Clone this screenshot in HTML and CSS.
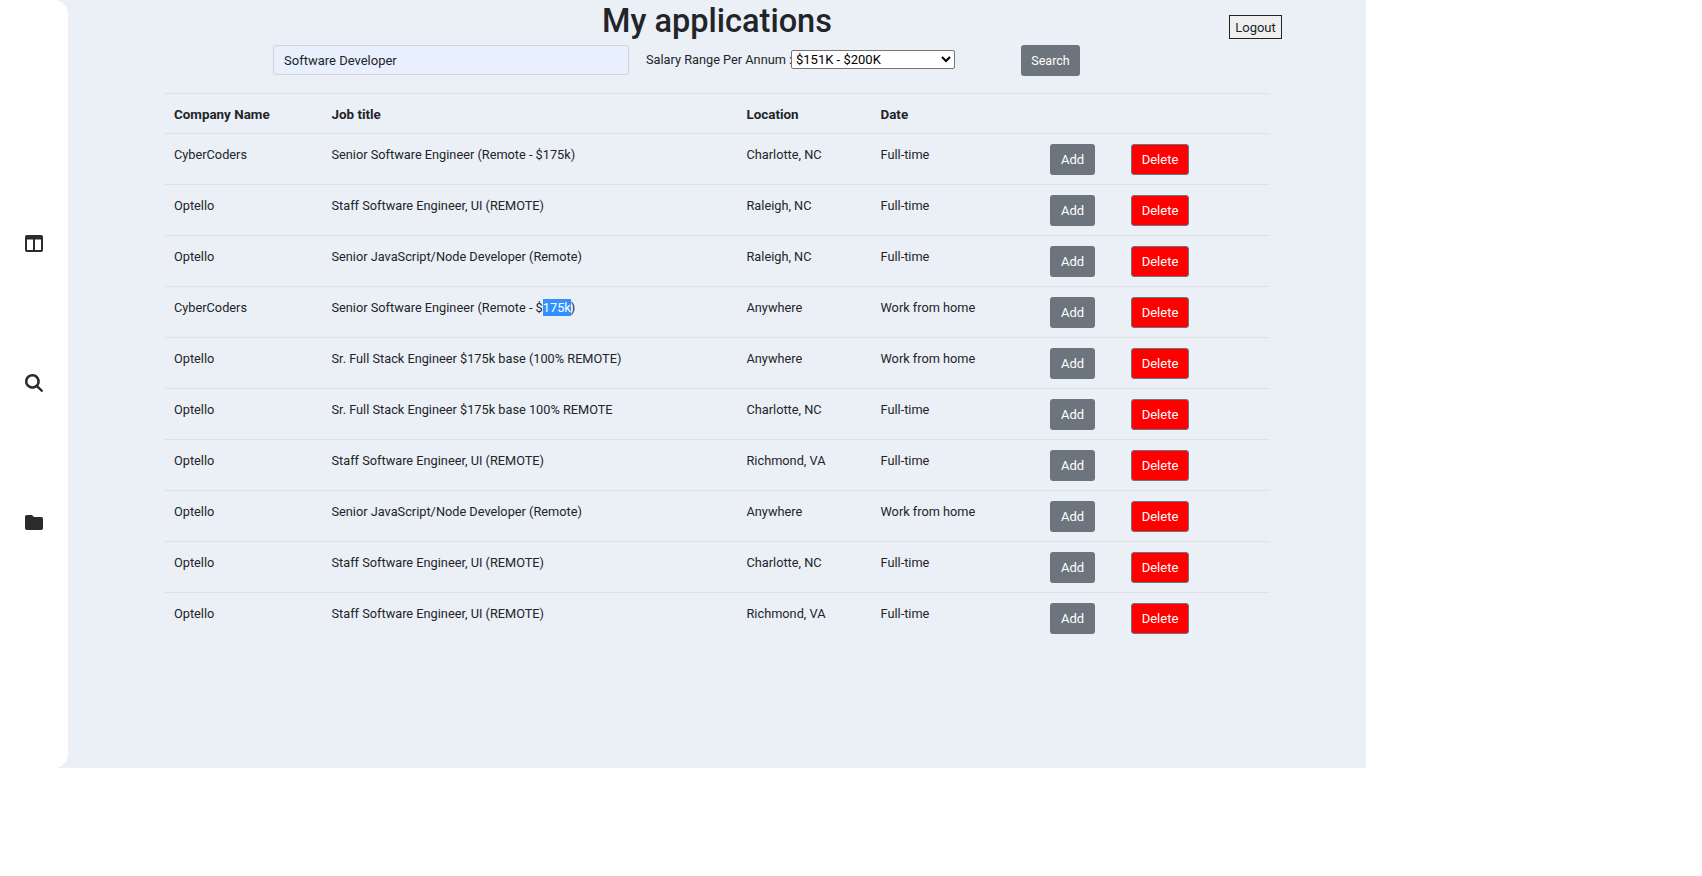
FILE: index.html
```html
<!DOCTYPE html>
<html lang="en">
<head>
  <meta charset="UTF-8">
  <title>My applications</title>
  <link rel="stylesheet" href="styles.css">
</head>
<body>
  <div class="app">
    <!-- Sidebar -->
    <nav class="sidebar">
      <svg class="icon icon-table" viewBox="0 0 18 17"><path fill-rule="evenodd" d="M2 0h14a2 2 0 0 1 2 2v13a2 2 0 0 1-2 2H2a2 2 0 0 1-2-2V2a2 2 0 0 1 2-2zM2 4.500V15h6V4.500zm8 0V15h6V4.500z"/></svg>
      <svg class="icon" viewBox="0 0 18 18"><path fill-rule="evenodd" d="M7.400 0a7.400 7.400 0 0 1 6 11.700l4.200 4.200a1.200 1.200 0 0 1-1.700 1.700l-4.200-4.200A7.400 7.400 0 1 1 7.400 0zm0 2.500a4.900 4.900 0 1 0 0 9.800 4.900 4.900 0 0 0 0-9.800z"/></svg>
      <svg class="icon icon-folder" viewBox="0 0 18 15"><path d="M1.800 0h4.700a1 1 0 0 1 .7.300L9 2h7.200A1.800 1.800 0 0 1 18 3.800v9.400a1.800 1.800 0 0 1-1.800 1.800H1.800A1.800 1.800 0 0 1 0 13.200V1.800A1.800 1.800 0 0 1 1.800 0z"/></svg>
    </nav>

    <main class="content">
      <header class="top">
        <h1>My applications</h1>
        <button class="logout" type="button">Logout</button>
      </header>

      <!-- Search -->
      <form class="search">
        <input class="search-input" type="text" value="Software Developer">
        <label class="salary-label" for="salary">Salary Range Per Annum :</label>
        <select class="salary" id="salary">
          <option>$151K - $200K</option>
        </select>
        <button class="btn btn-grey btn-search" type="button">Search</button>
      </form>

      <table>
        <thead>
          <tr>
            <th class="col-company">Company Name</th>
            <th class="col-title">Job title</th>
            <th class="col-location">Location</th>
            <th class="col-date">Date</th>
            <th class="col-add"></th>
            <th></th>
          </tr>
        </thead>
        <tbody>
          <tr>
            <td>CyberCoders</td>
            <td>Senior Software Engineer (Remote - $175k)</td>
            <td>Charlotte, NC</td>
            <td>Full-time</td>
            <td><button class="btn btn-grey" type="button">Add</button></td>
            <td><button class="btn btn-red" type="button">Delete</button></td>
          </tr>
          <tr>
            <td>Optello</td>
            <td>Staff Software Engineer, UI (REMOTE)</td>
            <td>Raleigh, NC</td>
            <td>Full-time</td>
            <td><button class="btn btn-grey" type="button">Add</button></td>
            <td><button class="btn btn-red" type="button">Delete</button></td>
          </tr>
          <tr>
            <td>Optello</td>
            <td>Senior JavaScript/Node Developer (Remote)</td>
            <td>Raleigh, NC</td>
            <td>Full-time</td>
            <td><button class="btn btn-grey" type="button">Add</button></td>
            <td><button class="btn btn-red" type="button">Delete</button></td>
          </tr>
          <tr>
            <td>CyberCoders</td>
            <td>Senior Software Engineer (Remote - $<span class="picked">175k</span>)</td>
            <td>Anywhere</td>
            <td>Work from home</td>
            <td><button class="btn btn-grey" type="button">Add</button></td>
            <td><button class="btn btn-red" type="button">Delete</button></td>
          </tr>
          <tr>
            <td>Optello</td>
            <td>Sr. Full Stack Engineer $175k base (100% REMOTE)</td>
            <td>Anywhere</td>
            <td>Work from home</td>
            <td><button class="btn btn-grey" type="button">Add</button></td>
            <td><button class="btn btn-red" type="button">Delete</button></td>
          </tr>
          <tr>
            <td>Optello</td>
            <td>Sr. Full Stack Engineer $175k base 100% REMOTE</td>
            <td>Charlotte, NC</td>
            <td>Full-time</td>
            <td><button class="btn btn-grey" type="button">Add</button></td>
            <td><button class="btn btn-red" type="button">Delete</button></td>
          </tr>
          <tr>
            <td>Optello</td>
            <td>Staff Software Engineer, UI (REMOTE)</td>
            <td>Richmond, VA</td>
            <td>Full-time</td>
            <td><button class="btn btn-grey" type="button">Add</button></td>
            <td><button class="btn btn-red" type="button">Delete</button></td>
          </tr>
          <tr>
            <td>Optello</td>
            <td>Senior JavaScript/Node Developer (Remote)</td>
            <td>Anywhere</td>
            <td>Work from home</td>
            <td><button class="btn btn-grey" type="button">Add</button></td>
            <td><button class="btn btn-red" type="button">Delete</button></td>
          </tr>
          <tr>
            <td>Optello</td>
            <td>Staff Software Engineer, UI (REMOTE)</td>
            <td>Charlotte, NC</td>
            <td>Full-time</td>
            <td><button class="btn btn-grey" type="button">Add</button></td>
            <td><button class="btn btn-red" type="button">Delete</button></td>
          </tr>
          <tr>
            <td>Optello</td>
            <td>Staff Software Engineer, UI (REMOTE)</td>
            <td>Richmond, VA</td>
            <td>Full-time</td>
            <td><button class="btn btn-grey" type="button">Add</button></td>
            <td><button class="btn btn-red" type="button">Delete</button></td>
          </tr>
        </tbody>
      </table>
    </main>
  </div>
</body>
</html>
```

FILE: styles.css
```css
body {
  margin: 0;
  background-color: #fff;
  color: #212529;
  font-family: Roboto, "Noto Sans", sans-serif;
  font-size: 12.75px;
}
.app {
  display: flex;
  width: 1366px;
  height: 768px;
  background-color: #ebeff6;
}
.sidebar {
  width: 68px;
  flex-shrink: 0;
  box-sizing: border-box;
  padding-top: 235px;
  display: flex;
  flex-direction: column;
  align-items: center;
  gap: 122px;
  background-color: #fff;
  border-radius: 0 14px 14px 0;
}
.icon {
  width: 18px;
  height: 18px;
  fill: #2b2b2b;
}
.icon-table {
  height: 17px;
}
.icon-folder {
  height: 15px;
  margin-top: 1px;
}
.content {
  flex: 1;
  padding: 0 96px;
}
.top {
  position: relative;
  height: 45px;
}
h1 {
  margin: 0;
  text-align: center;
  font-size: 32.5px;
  font-weight: 500;
  line-height: 43px;
}
.logout {
  position: absolute;
  top: 15px;
  right: -12px;
  width: 53px;
  height: 24px;
  padding: 0;
  border: 1px solid #222;
  background-color: #efefef;
  color: #212529;
  font: inherit;
  font-size: 13px;
}
.search {
  display: flex;
  align-items: flex-start;
  height: 31px;
  margin: 0 0 17px 109px;
}
.search-input {
  box-sizing: border-box;
  width: 356px;
  height: 30px;
  padding: 0 10px;
  border: 1px solid #ced4da;
  border-radius: 3px;
  background-color: #e8f0fe;
  color: #212529;
  font: inherit;
  font-size: 13px;
}
.salary-label {
  flex: 0 0 145px;
  min-width: 0;
  margin-left: 17px;
  line-height: 30px;
  white-space: nowrap;
}
.salary {
  width: 164px;
  height: 19px;
  margin-top: 5px;
  padding: 0;
  background-color: #fff;
  border: 1px solid #767676;
  border-radius: 2px;
  color: #000;
  font: inherit;
  font-size: 13px;
}
.btn {
  height: 31px;
  padding: 0;
  border: 1px solid transparent;
  border-radius: 3px;
  color: #fff;
  font: inherit;
  font-size: 13px;
}
.btn-grey {
  background-color: #6c757d;
  width: 45px;
}
.btn-search {
  width: 59px;
  margin-left: 66px;
  font-size: 12.5px;
}
.btn-red {
  background-color: #f00;
  border-color: #6c757d;
  width: 58px;
}
table {
  border-collapse: collapse;
  width: 1106px;
  table-layout: fixed;
}
th, td {
  border-top: 1px solid #dee2e6;
  padding: 10px 9px 8px 10px;
  height: 51px;
  box-sizing: border-box;
  text-align: left;
  vertical-align: top;
  line-height: 21px;
}
th {
  height: 40px;
  font-size: 13.4px;
  font-weight: 700;
}
td:nth-child(5), td:nth-child(6) {
  padding-left: 0;
}
.col-company { width: 157.5px; }
.col-title { width: 415px; }
.col-location { width: 134px; }
.col-date { width: 179.5px; }
.col-add { width: 81px; }
.picked {
  padding: 1px 0;
  background-color: #3390ff;
  color: #fff;
}
```
